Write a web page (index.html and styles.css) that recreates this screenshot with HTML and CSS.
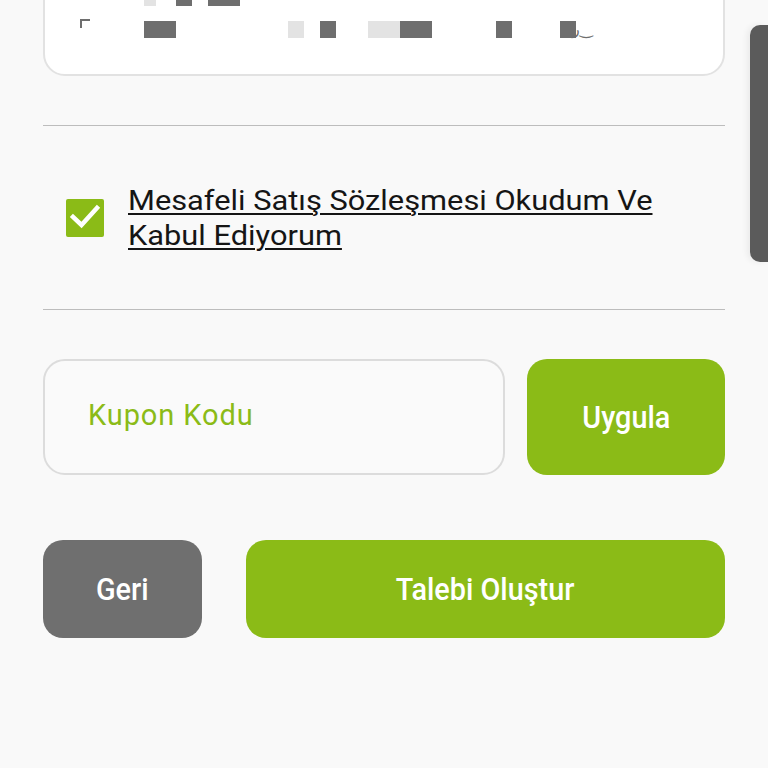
FILE: index.html
```html
<!DOCTYPE html>
<html lang="tr">
<head>
    <meta charset="UTF-8">
    <meta name="viewport" content="width=device-width, initial-scale=1.0">
    <title>Sipariş Özeti</title>
    <link rel="stylesheet" href="styles.css">
</head>
<body>
    <div class="page">
        <!-- address summary card, content masked -->
        <div class="card">
            <div class="mask-row top">
                <span class="blk light w12 at144"></span>
                <span class="blk dark w16 at176"></span>
                <span class="blk dark w32 at208"></span>
            </div>
            <div class="mask-row">
                <span class="corner"></span>
                <span class="blk dark w32 at144"></span>
                <span class="blk light w16 at288"></span>
                <span class="blk dark w16 at320"></span>
                <span class="blk light w32 at368"></span>
                <span class="blk dark w32 at400"></span>
                <span class="blk dark w16 at496"></span>
                <span class="blk dark w16 at560"></span>
                <span class="tail">ﺭ‿</span>
            </div>
        </div>

        <hr class="divider">

        <label class="agree">
            <span class="check">
                <svg width="38" height="38" viewBox="0 0 38 38">
                    <path d="M7 18 L15.5 26 L31 9" fill="none" stroke="#fff" stroke-width="4.5" stroke-linecap="square"/>
                </svg>
            </span>
            <a class="agree-text" href="#">Mesafeli Satış Sözleşmesi Okudum Ve Kabul Ediyorum</a>
        </label>

        <hr class="divider">

        <form class="coupon" action="#">
            <input class="coupon-input" type="text" placeholder="Kupon Kodu">
            <button class="btn green apply" type="button"><span class="btn-text">Uygula</span></button>
        </form>

        <div class="actions">
            <button class="btn gray back" type="button"><span class="btn-text">Geri</span></button>
            <button class="btn green submit" type="button"><span class="btn-text">Talebi Oluştur</span></button>
        </div>
    </div>

    <div class="scrollbar"></div>
</body>
</html>
```

FILE: styles.css
```css
body {
    margin: 0;
    padding: 0;
    background-color: #f9f9f9;
    font-family: Roboto, "Liberation Sans", sans-serif;
    overflow: hidden;
}
.page {
    padding: 0 43px 0 43px;
}
.card {
    margin-top: -32px;
    height: 108px;
    background-color: #fff;
    border: 2px solid #e2e2e2;
    border-radius: 22px;
    box-sizing: border-box;
    width: 682px;
}
.mask-row {
    position: relative;
    height: 17px;
    margin-left: -45px;
    margin-top: 15px;
}
.mask-row.top {
    height: 6px;
    margin-top: 30px;
    top: 0;
}
.blk {
    position: absolute;
    top: 0;
    height: 100%;
}
.dark { background-color: #6e6e6e; }
.light { background-color: #e3e3e3; }
.w12 { width: 12px; }
.w16 { width: 16px; }
.w32 { width: 32px; }
.at144 { left: 144px; }
.at176 { left: 176px; }
.at208 { left: 208px; }
.at288 { left: 288px; }
.at320 { left: 320px; }
.at368 { left: 368px; }
.at400 { left: 400px; }
.at496 { left: 496px; }
.at560 { left: 560px; }
.corner {
    position: absolute;
    left: 80px;
    top: -2px;
    width: 8px;
    height: 7px;
    border-top: 2px solid #6e6e6e;
    border-left: 2px solid #6e6e6e;
}
.tail {
    position: absolute;
    left: 572px;
    top: -2px;
    font-size: 16px;
    line-height: 20px;
    color: #6e6e6e;
    font-family: "DejaVu Sans", sans-serif;
}
.divider {
    border: none;
    border-top: 1px solid #bdbdbd;
    margin: 49px 0 0 0;
}
.agree {
    display: flex;
    align-items: center;
    gap: 24px;
    height: 183px;
    padding-left: 23px;
}
.agree + .divider {
    margin-top: 0;
}
.check {
    flex: none;
    width: 38px;
    height: 38px;
    background-color: #8bbb17;
    border-radius: 2px;
}
/* the label face is set wide; scale keeps wrapping at the narrow width */
.agree-text {
    display: inline-block;
    color: #151515;
    font-size: 28px;
    line-height: 35px;
    text-decoration: underline;
    text-decoration-thickness: 2px;
    text-underline-offset: 3px;
    max-width: 490px;
    transform: scaleX(1.1);
    transform-origin: left center;
}
.coupon {
    display: flex;
    gap: 22px;
    margin-top: 49px;
    height: 116px;
}
.coupon-input {
    flex: 1;
    border: 2px solid #dcdcdc;
    border-radius: 22px;
    background-color: #fafafa;
    padding: 0 0 4px 43px;
    font-family: inherit;
    font-size: 29px;
    letter-spacing: 0.9px;
    outline: none;
}
.coupon-input::placeholder {
    color: #8bbb17;
}
.btn {
    border: none;
    border-radius: 20px;
    color: #fff;
    font-family: inherit;
    font-size: 31px;
    font-weight: 500;
    cursor: pointer;
}
.btn-text {
    display: inline-block;
    transform: scaleX(0.93);
}
.green { background-color: #8bbb17; }
.gray { background-color: #6f6f6f; }
.apply {
    width: 198px;
}
.actions {
    display: flex;
    gap: 44px;
    margin-top: 65px;
    height: 98px;
}
.back {
    width: 159px;
}
.submit {
    flex: 1;
}
.scrollbar {
    position: fixed;
    right: 0;
    top: 25px;
    width: 18px;
    height: 237px;
    background-color: #5b5b5b;
    border-radius: 10px 0 0 10px;
    box-shadow: -3px 0 6px rgba(0, 0, 0, 0.06);
}
```
